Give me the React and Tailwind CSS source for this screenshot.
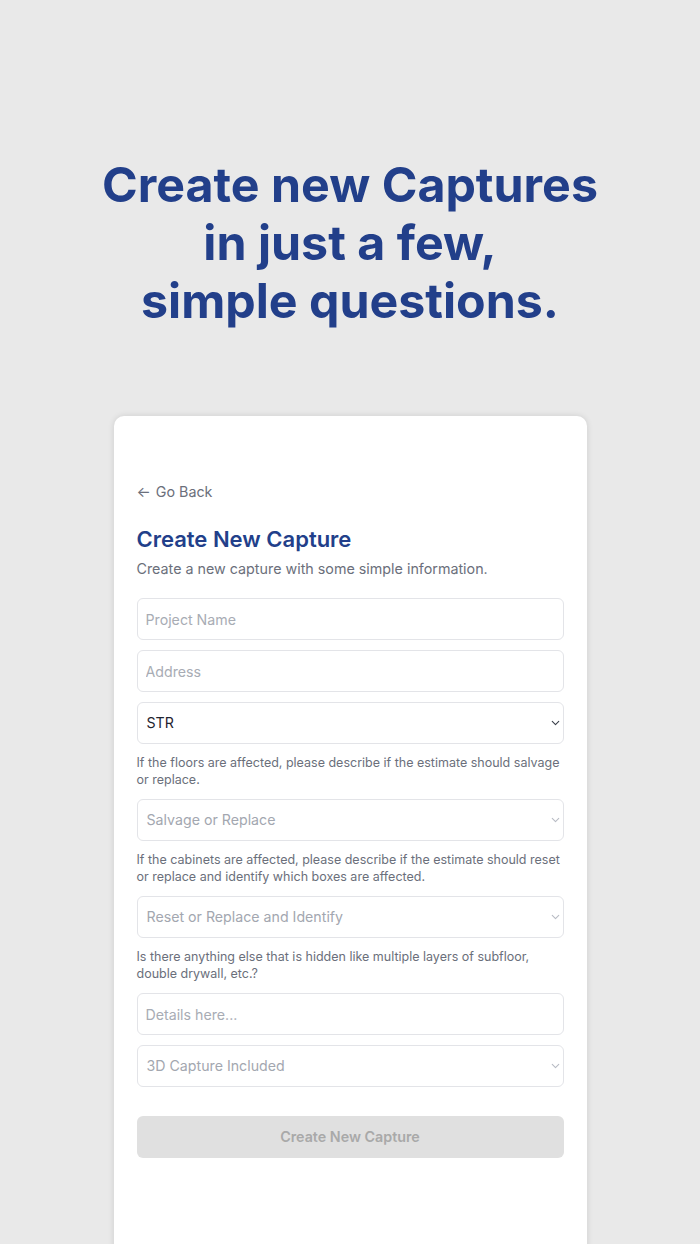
import { FiChevronDown } from 'react-icons/fi'

function Select({ label, muted = true }) {
  return (
    <div className="relative">
      <div className={`h-[42px] w-full rounded-md border border-[#e3e4e8] bg-white pl-[9px] pr-8 flex items-center text-[14.2px] ${muted ? 'text-[#a3a7b0]' : 'text-[#1f2430]'}`}>
        {label}
      </div>
      <FiChevronDown className={`absolute right-[2px] top-1/2 -translate-y-1/2 text-[13px] ${muted ? 'text-[#b8bcc4]' : 'text-[#3a3f4a]'}`} />
    </div>
  )
}

function Input({ placeholder }) {
  return (
    <input
      type="text"
      placeholder={placeholder}
      className="h-[42px] w-full rounded-md border border-[#e3e4e8] bg-white px-2 text-[14.2px] text-[#1f2430] placeholder:text-[#a8acb4] outline-none"
    />
  )
}

function Hint({ children }) {
  return <p className="text-[12.5px] leading-[17px] text-[#6b6f7b] pb-[1px]">{children}</p>
}

export default function App() {
  return (
    <div className="min-h-[1244px] h-[1244px] overflow-hidden bg-[#e9e9e9] flex flex-col items-center" style={{ fontFamily: 'Inter, "Noto Sans", sans-serif' }}>
      <h1 className="pt-[156px] text-center text-[48.3px] leading-[58px] font-bold text-[#223f8a]">
        Create new Captures<br />in just a few,<br />simple questions.
      </h1>

      <div className="mt-[86px] w-[473px] min-h-[900px] rounded-[10px] bg-white shadow-[0_0_6px_rgba(0,0,0,0.12)] px-[23px] pt-[65px]">
        <button className="flex items-center gap-[5px] text-[14.3px] leading-[22px] text-[#6b6f7b]">
          <span className="text-[15px]">←</span> Go Back
        </button>

        <h2 className="mt-[22px] text-[22px] leading-[28px] font-semibold text-[#223f8a]">Create New Capture</h2>
        <p className="mt-[6px] text-[14.3px] leading-[20px] text-[#6b6f7b]">Create a new capture with some simple information.</p>

        <div className="mt-[19px] flex flex-col gap-[10px]">
          <Input placeholder="Project Name" />
          <Input placeholder="Address" />
          <Select label="STR" muted={false} />
          <Hint>If the floors are affected, please describe if the estimate should salvage or replace.</Hint>
          <Select label="Salvage or Replace" />
          <Hint>If the cabinets are affected, please describe if the estimate should reset or replace and identify which boxes are affected.</Hint>
          <Select label="Reset or Replace and Identify" />
          <Hint>Is there anything else that is hidden like multiple layers of subfloor, double drywall, etc.?</Hint>
          <Input placeholder="Details here..." />
          <Select label="3D Capture Included" />
        </div>

        <button disabled className="mt-[29px] h-[42px] w-full rounded-md bg-[#e0e0e0] text-[14.3px] font-semibold text-[#a9a9a9]">
          Create New Capture
        </button>
      </div>
    </div>
  )
}
